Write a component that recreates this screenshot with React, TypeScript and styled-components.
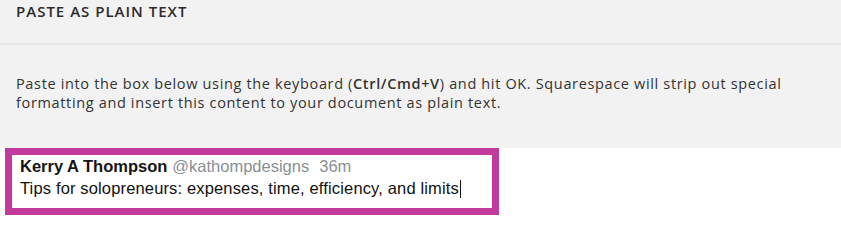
import React, { FC } from 'react';
import styled, { createGlobalStyle } from 'styled-components';

const GlobalStyle = createGlobalStyle`
    html, body {
        margin: 0;
        padding: 0;
        background: #ffffff;
    }
`;

const PageWrapper = styled.div`
    width: 841px;
    height: 225px;
    overflow: hidden;
    display: flex;
    flex-direction: column;
    background: #ffffff;
`;

const Header = styled.div`
    height: 41px;
    box-sizing: content-box;
    padding: 1px 16px 1px;
    background: #f2f2f2;
    border-bottom: 2px solid #e6e6e6;
`;

const Title = styled.div`
    font-family: 'Open Sans', Lato, sans-serif;
    font-size: 15px;
    line-height: 20px;
    font-weight: 600;
    letter-spacing: 1px;
    color: #2b2b2b;
`;

const Body = styled.div`
    background: #f2f2f2;
    padding: 29px 16px 36px;
`;

const Description = styled.p`
    margin: 0;
    font-family: 'Open Sans', Lato, sans-serif;
    font-size: 14.5px;
    line-height: 19px;
    color: #333333;
    letter-spacing: 0.65px;

    strong {
        font-weight: 600;
    }
`;

const PasteBox = styled.div`
    margin-left: 5px;
    width: 494px;
    height: 67px;
    box-sizing: border-box;
    border: 7px solid #c13a9c;
    padding: 0 8px;
    background: #ffffff;
    font-family: 'Liberation Sans', Arial, sans-serif;
    font-size: 16.5px;
    line-height: 22px;
    color: #111111;
`;

const TweetHead = styled.div`
    display: flex;
    align-items: baseline;
    white-space: nowrap;
`;

const Name = styled.span`
    font-weight: 700;
    color: #141414;
`;

const Muted = styled.span<{ $gap: number }>`
    color: #8a8f94;
    margin-left: ${p => p.$gap}px;
`;

const TweetText = styled.div`
    white-space: nowrap;
    letter-spacing: 0.15px;
`;

const Caret = styled.span`
    display: inline-block;
    width: 0;
    height: 18px;
    border-left: 1px solid #111111;
    margin-left: 1px;
    vertical-align: -4px;
`;

const App: FC = () => (
    <PageWrapper>
        <GlobalStyle />
        <Header>
            <Title>PASTE AS PLAIN TEXT</Title>
        </Header>
        <Body>
            <Description>
                Paste into the box below using the keyboard (<strong>Ctrl/Cmd+V</strong>) and hit OK. Squarespace will strip out special
                <br />
                formatting and insert this content to your document as plain text.
            </Description>
        </Body>
        <PasteBox>
            <TweetHead>
                <Name>Kerry A Thompson</Name>
                <Muted $gap={5}>@kathompdesigns</Muted>
                <Muted $gap={10}>36m</Muted>
            </TweetHead>
            <TweetText>
                Tips for solopreneurs: expenses, time, efficiency, and limits
                <Caret />
            </TweetText>
        </PasteBox>
    </PageWrapper>
);

export default App;
